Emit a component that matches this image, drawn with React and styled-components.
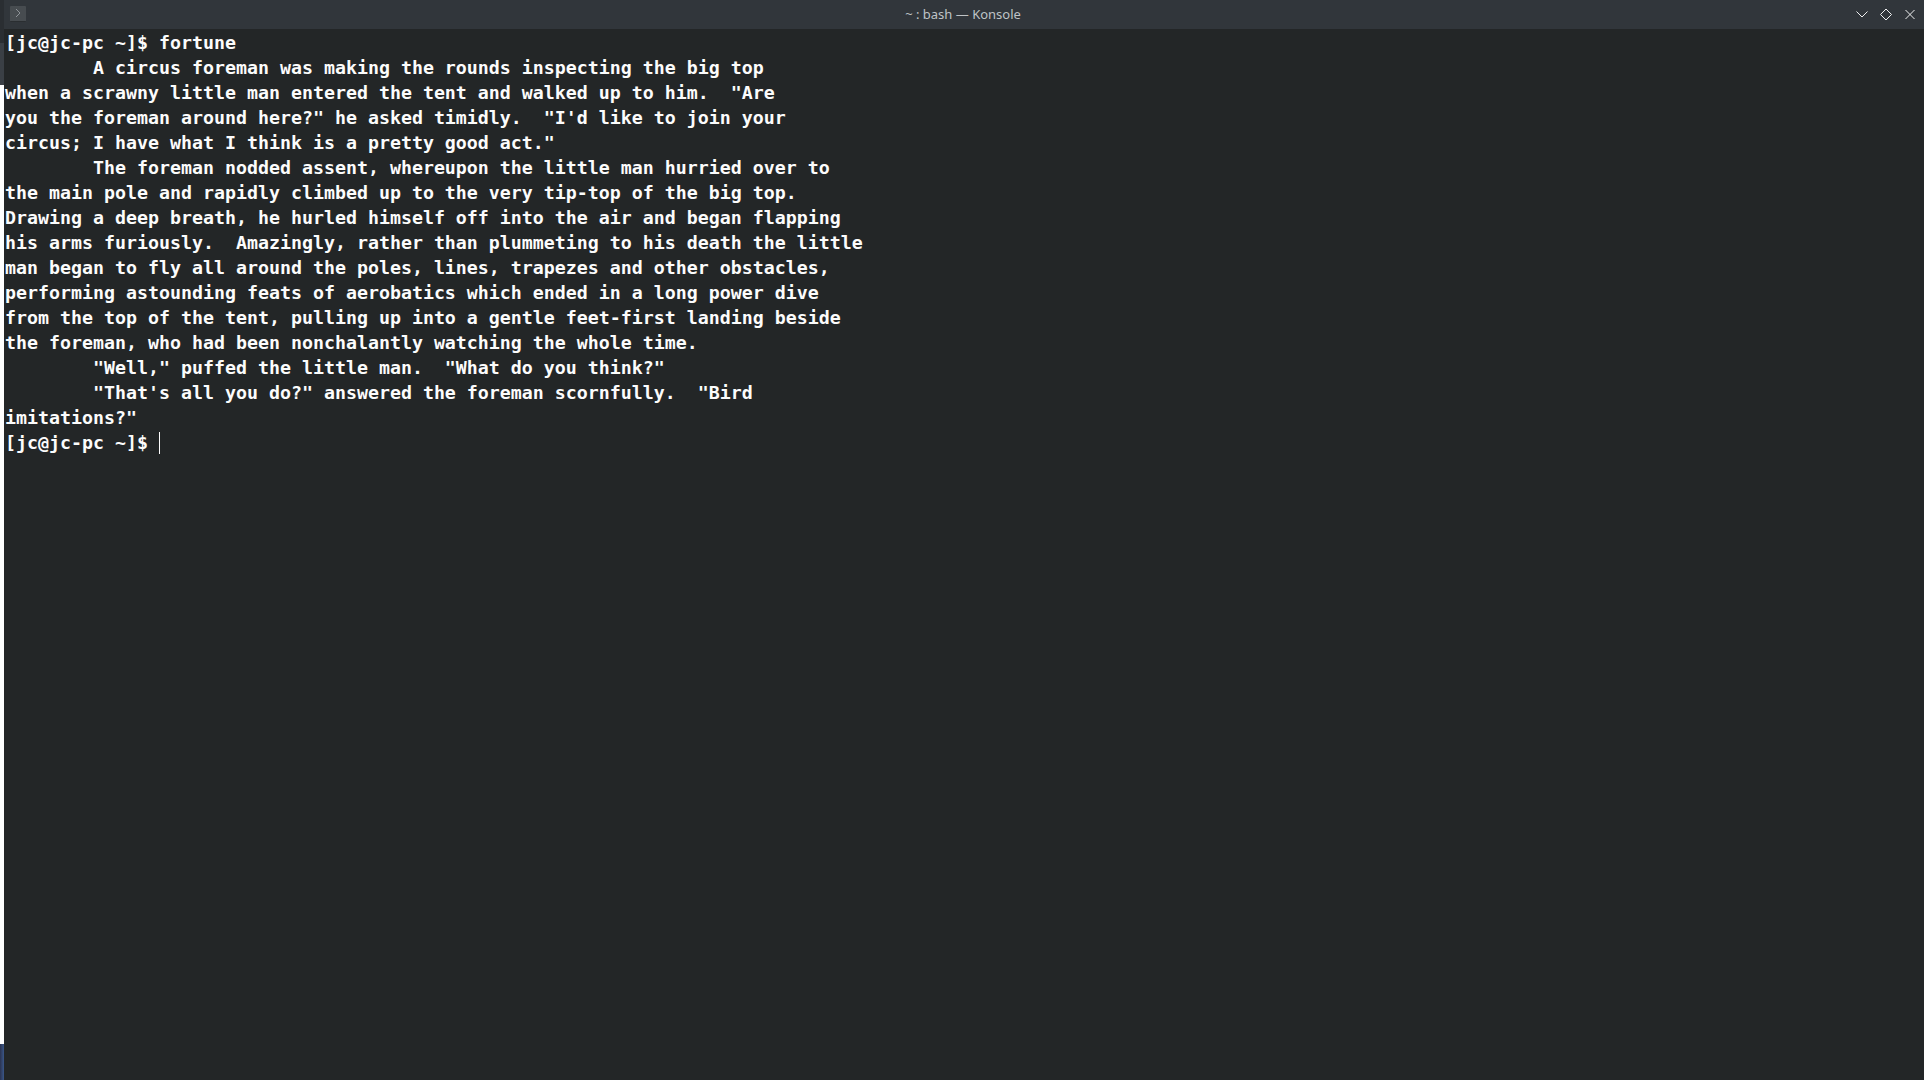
import React from "react";
import styled, { createGlobalStyle } from "styled-components";

const GlobalStyle = createGlobalStyle`
  html, body {
    margin: 0;
    padding: 0;
    background: #232627;
    overflow: hidden;
  }
`;

const Desktop = styled.div`
  width: 1924px;
  height: 1080px;
  display: flex;
  overflow: hidden;
`;

const DesktopEdge = styled.div`
  width: 4px;
  flex: none;
  display: flex;
  flex-direction: column;
`;

const EdgeBand = styled.div`
  height: ${(p) => p.$size}px;
  flex: ${(p) => (p.$size ? "none" : 1)};
  background: ${(p) => p.$color};
`;

const Window = styled.div`
  flex: 1;
  display: flex;
  flex-direction: column;
  min-width: 0;
`;

const TitleBar = styled.div`
  height: 29px;
  flex: none;
  display: flex;
  align-items: center;
  justify-content: space-between;
  background: #31363b;
  padding: 0 6px 2px 6px;
  box-sizing: border-box;
  position: relative;
`;

const AppIcon = styled.div`
  width: 16px;
  height: 16px;
  border-radius: 1px;
  background: #474c50;
  border-bottom: 1px solid #2a2e31;
  box-sizing: border-box;
  display: flex;
  align-items: center;
  justify-content: center;
`;

const Title = styled.div`
  position: absolute;
  left: 0;
  right: 2px;
  top: 6px;
  text-align: center;
  font: 13px/17px "Noto Sans", sans-serif;
  color: #bfc3c6;
`;

const WindowButtons = styled.div`
  display: flex;
  gap: 8px;
`;

const WindowButton = styled.button`
  width: 16px;
  height: 16px;
  padding: 0;
  border: 0;
  background: none;
  display: flex;
  color: #eff0f1;
`;

const Terminal = styled.pre`
  flex: 1;
  margin: 0;
  padding: 1px 0 0 1px;
  background: #232627;
  color: #fcfcfc;
  font-family: "DejaVu Sans Mono", "Liberation Mono", monospace;
  font-weight: 700;
  font-size: 18.27px;
  line-height: 25px;
`;

const Cursor = styled.span`
  display: inline-block;
  width: 1px;
  height: 22px;
  background: #fcfcfc;
  vertical-align: -5px;
`;

const OUTPUT = [
  "[jc@jc-pc ~]$ fortune",
  "        A circus foreman was making the rounds inspecting the big top",
  'when a scrawny little man entered the tent and walked up to him.  "Are',
  'you the foreman around here?" he asked timidly.  "I\'d like to join your',
  'circus; I have what I think is a pretty good act."',
  "        The foreman nodded assent, whereupon the little man hurried over to",
  "the main pole and rapidly climbed up to the very tip-top of the big top.",
  "Drawing a deep breath, he hurled himself off into the air and began flapping",
  "his arms furiously.  Amazingly, rather than plummeting to his death the little",
  "man began to fly all around the poles, lines, trapezes and other obstacles,",
  "performing astounding feats of aerobatics which ended in a long power dive",
  "from the top of the tent, pulling up into a gentle feet-first landing beside",
  "the foreman, who had been nonchalantly watching the whole time.",
  '        "Well," puffed the little man.  "What do you think?"',
  '        "That\'s all you do?" answered the foreman scornfully.  "Bird',
  'imitations?"',
];

export default function App() {
  return (
    <Desktop>
      <GlobalStyle />
      <DesktopEdge>
        <EdgeBand $size={43} $color="#2a2e32" />
        <EdgeBand $size={42} $color="#3a3f45" />
        <EdgeBand $size={959} $color="#ffffff" />
        <EdgeBand $color="linear-gradient(90deg, #2b3350, #3a5688)" />
      </DesktopEdge>
      <Window>
        <TitleBar>
          <AppIcon>
            <svg width="10" height="10" viewBox="0 0 10 10" fill="none">
              <path d="M3 1l4 4-4 4" stroke="#8f9499" strokeWidth="1" />
            </svg>
          </AppIcon>
          <Title>~ : bash — Konsole</Title>
          <WindowButtons>
            <WindowButton>
              <svg width="16" height="16" viewBox="0 0 16 16" fill="none" stroke="currentColor">
                <path d="M2.5 5.5L8 11l5.5-5.5" />
              </svg>
            </WindowButton>
            <WindowButton>
              <svg width="16" height="16" viewBox="0 0 16 16" fill="none" stroke="currentColor">
                <path d="M8 3L13.5 8.5 8 14 2.5 8.5z" />
              </svg>
            </WindowButton>
            <WindowButton>
              <svg width="16" height="16" viewBox="0 0 16 16" fill="none" stroke="currentColor">
                <path d="M3.5 4l9 9M12.5 4l-9 9" />
              </svg>
            </WindowButton>
          </WindowButtons>
        </TitleBar>
        <Terminal>
          {OUTPUT.join("\n")}
          {"\n[jc@jc-pc ~]$ "}
          <Cursor />
        </Terminal>
      </Window>
    </Desktop>
  );
}
